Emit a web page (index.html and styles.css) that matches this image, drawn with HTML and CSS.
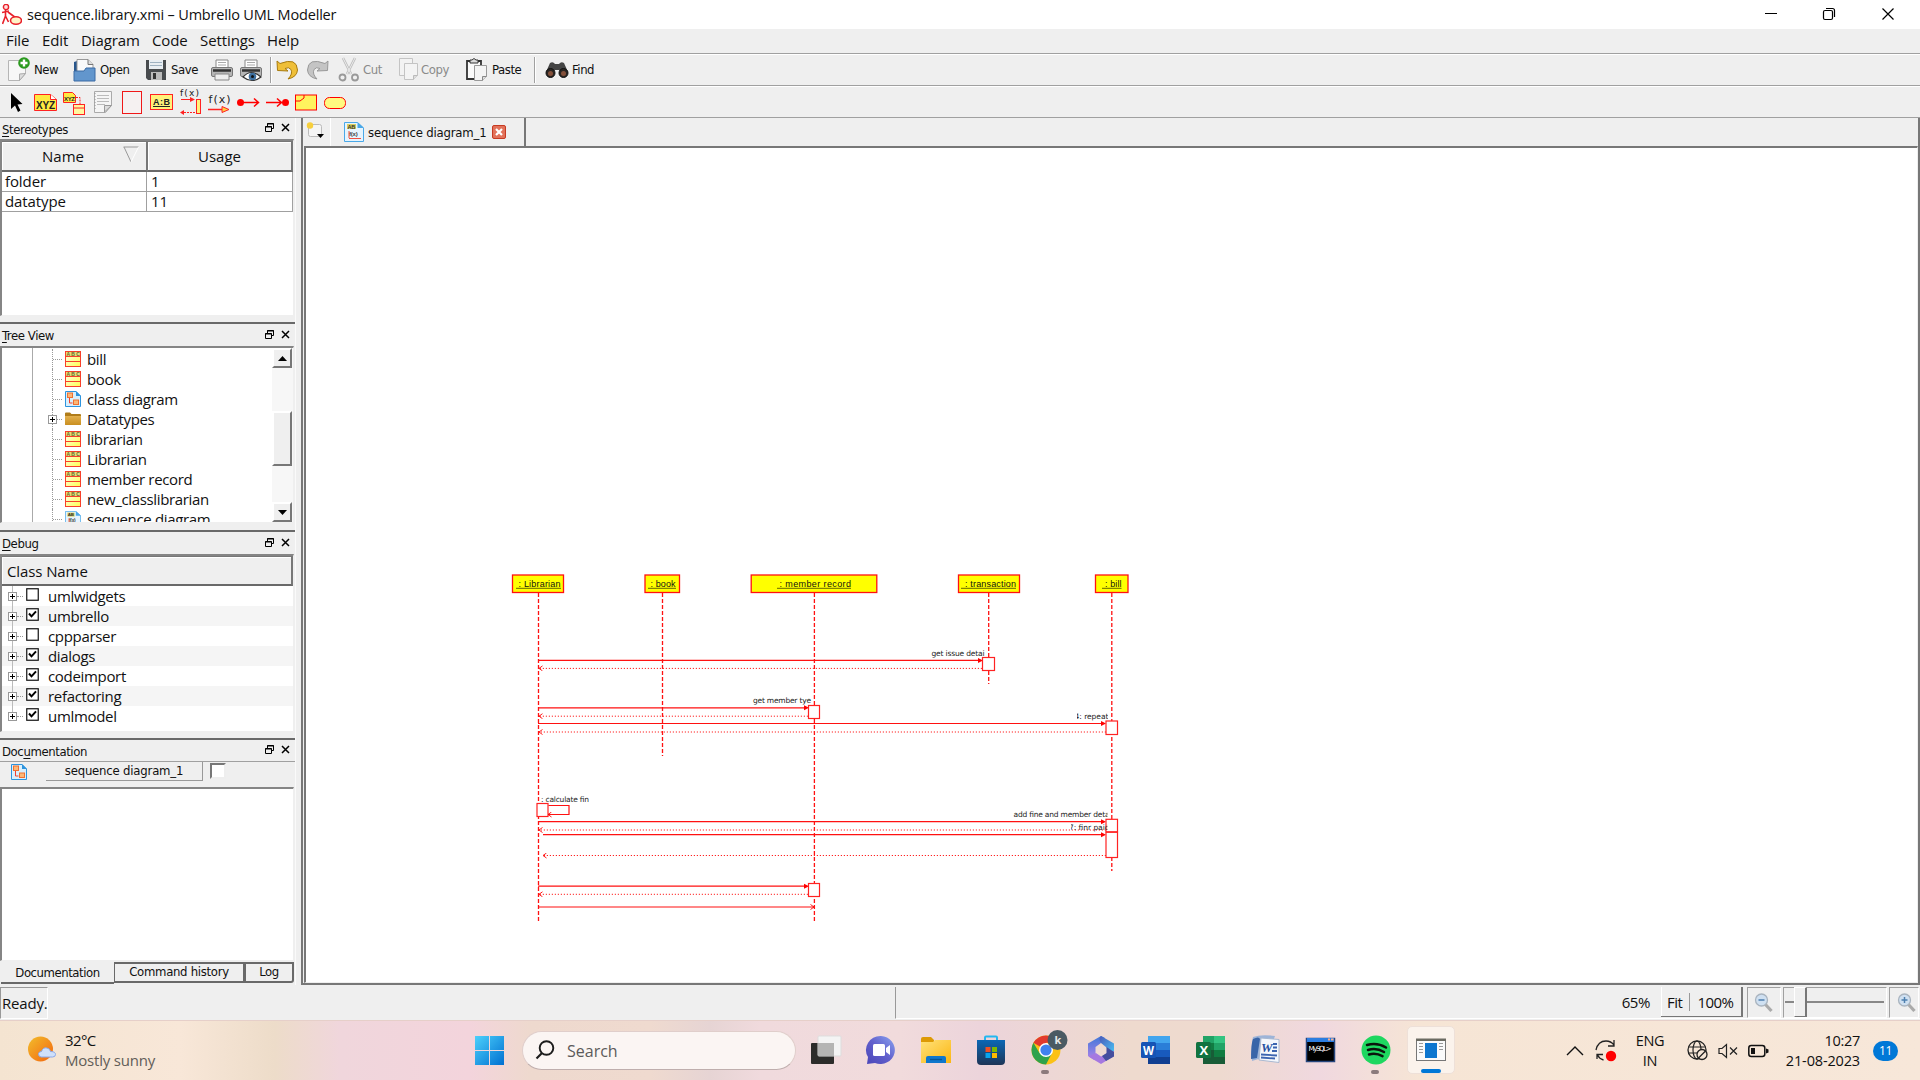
FILE: index.html
```html
<!DOCTYPE html>
<html lang="en">
<head>
<meta charset="utf-8">
<title>sequence.library.xmi – Umbrello UML Modeller</title>
<link rel="stylesheet" href="styles.css">
</head>
<body>
<svg class="defs" width="0" height="0">
  <defs>
    <linearGradient id="gy" x1="0" y1="0" x2="1" y2="1"><stop offset="0" stop-color="#fffef0"/><stop offset="1" stop-color="#ffff50"/></linearGradient>
    <linearGradient id="gf" x1="0" y1="0" x2="0" y2="1"><stop offset="0" stop-color="#e3b04e"/><stop offset="1" stop-color="#c98f20"/></linearGradient>
    <linearGradient id="gw" x1="0" y1="0" x2="1" y2="1"><stop offset="0" stop-color="#4cd0fb"/><stop offset="1" stop-color="#0070d1"/></linearGradient>
    <symbol id="i-class" viewBox="0 0 16 16"><rect x=".5" y=".5" width="15" height="15" fill="url(#gy)" stroke="#f7402a"/><path d="M1 1h14v4H1z" fill="#e6de78"/><path d="M0 5.5h16M0 10.5h16" stroke="#f7402a"/><text x="1.500" y="4.800" font-size="5" font-weight="bold" font-family="Liberation Sans, sans-serif" fill="#6b672c" textLength="13">ABC</text></symbol>
    <symbol id="i-cdiag" viewBox="0 0 16 16"><path d="M.5.5h10.500l4.500 4.500v10.500H.5z" fill="#d9effc" stroke="#2d94de"/><path d="M11 0v5h5z" fill="#2d94de"/><rect x="2.500" y="2" width="5" height="4.500" fill="#fbb878" stroke="#f07030"/><rect x="8.500" y="9" width="5" height="4.500" fill="#fbb878" stroke="#f07030"/><path d="M4.500 7v5h3" fill="none" stroke="#f04030"/></symbol>
    <symbol id="i-sdiag" viewBox="0 0 20 20"><path d="M.5.5h13l6 5.500v13.500H.5z" fill="#e6f4fd" stroke="#4aa8e8"/><path d="M13.500 0v6H20z" fill="#4aa8e8"/><rect x="3" y="2" width="9" height="5" fill="#d9d060"/><text x="3.500" y="6.800" font-size="5.500" font-weight="bold" font-family="Liberation Sans, sans-serif" fill="#333">AB</text><text x="5" y="14" font-size="6" font-weight="bold" font-family="Liberation Sans, sans-serif" fill="#444">f(x)</text><path d="M5 16.500h12M5 9v7" stroke="#f05040" fill="none"/></symbol>
    <symbol id="i-folder" viewBox="0 0 16 16"><path d="M0 2.500q0-1 1-1h4l1.500 1.500H15q1 0 1 1V13q0 1-1 1H1q-1 0-1-1z" fill="#b07c1a"/><path d="M0 5h16v8q0 1-1 1H1q-1 0-1-1z" fill="url(#gf)"/></symbol>
    <symbol id="i-float" viewBox="0 0 9 9"><path d="M2.500 3V.5h6v5H6.500M2 1h7" fill="none" stroke="#000"/><path d="M.5 3.500h6v5h-6zM0 4h7" fill="none" stroke="#000"/></symbol>
    <symbol id="i-x" viewBox="0 0 9 9"><path d="M1 1l7 7M8 1L1 8" stroke="#000" stroke-width="1.500"/></symbol>
    <symbol id="i-plus" viewBox="0 0 9 9"><rect x=".5" y=".5" width="8" height="8" fill="#fff" stroke="#999"/><path d="M2 4.500h5M4.500 2v5" stroke="#000"/></symbol>
    <symbol id="i-off" viewBox="0 0 13 13"><rect x=".75" y=".75" width="11.500" height="11.500" fill="#fff" stroke="#111" stroke-width="1.200"/></symbol>
    <symbol id="i-on" viewBox="0 0 13 13"><rect x=".75" y=".75" width="11.500" height="11.500" fill="#fff" stroke="#111" stroke-width="1.200"/><path d="M3 5.500l2.500 2.800 4.500-5" fill="none" stroke="#000" stroke-width="2"/></symbol>
    <symbol id="i-mag" viewBox="0 0 20 20"><path d="M11 11l6.500 7" stroke="#aaa" stroke-width="3.200"/><circle cx="7.500" cy="7" r="6" fill="#cfe0f1" stroke="#a9b4bf" stroke-width="1.300"/></symbol>
  </defs>
</svg>

<header class="titlebar">
  <svg class="app-icon" width="20" height="22" viewBox="0 0 20 22"><path d="M3.500 6v6M0 8.500l7-1.500M3.500 12L.5 20M3.500 12l3 6M6 8l8 6" stroke="#e8202a" stroke-width="1.600" fill="none"/><circle cx="4" cy="3" r="2.600" fill="#fdd" stroke="#e8202a" stroke-width="1.400"/><ellipse cx="14" cy="16.500" rx="5.500" ry="3.800" fill="#fff3c8" stroke="#e8202a" stroke-width="1.600"/></svg>
  <span class="title">sequence.library.xmi – Umbrello UML Modeller</span>
  <div class="win-buttons">
    <svg width="58" height="29"><path d="M23 13.500h12" stroke="#000"/></svg>
    <svg width="58" height="29"><rect x="23.500" y="10.500" width="9" height="9" rx="1.500" fill="none" stroke="#000" stroke-width="1.200"/><path d="M26 8.500h6.500q2 0 2 2V17" fill="none" stroke="#000" stroke-width="1.200"/></svg>
    <svg width="58" height="29"><path d="M24.500 8.500l11 11M35.500 8.500l-11 11" stroke="#000" stroke-width="1.200"/></svg>
  </div>
</header>

<nav class="menubar"><span class="m1">File</span><span class="m2">Edit</span><span class="m3">Diagram</span><span class="m4">Code</span><span class="m5">Settings</span><span>Help</span></nav>

<div class="toolbar main-tools">
  <div class="tool w-new"><svg width="24" height="26" viewBox="0 0 24 26"><path d="M1.500 3.500h17v13l-6 7h-11z" fill="#f7f7f7" stroke="#b5b5b5"/><path d="M12.500 23.500v-6.500l6-.5z" fill="#ddd" stroke="#aaa"/><circle cx="17" cy="6" r="5.800" fill="#2b9a1e"/><path d="M17 2.500v7M13.500 6h7" stroke="#fff" stroke-width="2.400"/></svg><span>New</span></div>
  <div class="tool w-open"><svg width="24" height="26" viewBox="0 0 24 26"><path d="M1 5l3-1v18H1z" fill="#28568c"/><path d="M4 2.500h11l5 5V16H4z" fill="#fafafa" stroke="#999"/><path d="M15 2.500v5h5" fill="#ddd" stroke="#777"/><path d="M1 14h10l2-3h9v13H1z" fill="#6296cd" stroke="#3a6ba4"/></svg><span>Open</span></div>
  <div class="tool w-save"><svg width="24" height="26" viewBox="0 0 24 26"><path d="M2 3h20v20H4l-2-2z" fill="#484b4e"/><rect x="5" y="3" width="14" height="9" fill="#e8eef3"/><path d="M6 5.500h12M6 8.500h12" stroke="#9eb2c2"/><rect x="7" y="15" width="11" height="8" fill="#bbb"/><rect x="9" y="16" width="3" height="6" fill="#333"/></svg><span>Save</span></div>
  <div class="tool w-print"><svg width="24" height="26" viewBox="0 0 24 26"><path d="M6 3h12v8H6z" fill="#fff" stroke="#888"/><path d="M8 5.500h8M8 8h8" stroke="#aaa"/><rect x="1.500" y="10.500" width="21" height="9" rx="1.500" fill="#b5b5b5" stroke="#777"/><path d="M3 13.500h18" stroke="#333" stroke-width="2.500"/><path d="M5 17h14v6H5z" fill="#eee" stroke="#888"/></svg></div>
  <div class="tool w-preview"><svg width="24" height="26" viewBox="0 0 24 26"><path d="M6 3h12v8H6z" fill="#fff" stroke="#888"/><path d="M8 5.500h8M8 8h8" stroke="#aaa"/><rect x="1.500" y="10.500" width="21" height="9" rx="1.500" fill="#b5b5b5" stroke="#777"/><path d="M3 13.500h18" stroke="#333" stroke-width="2.500"/><path d="M4 20q8-9 18 0-9 7-18 0z" fill="#fff" stroke="#333" stroke-width="1.200"/><circle cx="13.500" cy="19.500" r="3.800" fill="#3d6f9f"/><circle cx="13.500" cy="19.500" r="1.500" fill="#111"/></svg></div>
  <i class="sep"></i>
  <div class="tool w-undo"><svg width="24" height="24" viewBox="0 0 24 24"><path d="M1 3l3 2.500Q21-1 21.500 12 21 19 12 21q5-5 3-9.500-2-3-6-1L12 13 1.500 12.500z" fill="#efbf38" stroke="#a87b10"/></svg></div>
  <div class="tool w-redo"><svg width="24" height="24" viewBox="0 0 24 24"><path d="M23 3l-3 2.500Q3-1 2.500 12 3 19 12 21q-5-5-3-9.500 2-3 6-1L12 13l10.500-.5z" fill="#c4c4c4" stroke="#999"/></svg></div>
  <div class="tool off w-cut"><svg width="22" height="26" viewBox="0 0 22 26"><path d="M5 1l8 16M17 1L9 17" stroke="#bbb" stroke-width="2.600"/><path d="M5 1l8 16M17 1L9 17" stroke="#eee" stroke-width="1"/><circle cx="4.500" cy="20.500" r="3" fill="none" stroke="#999" stroke-width="1.800"/><circle cx="17" cy="20.500" r="3" fill="none" stroke="#999" stroke-width="1.800"/></svg><span>Cut</span></div>
  <div class="tool off w-copy"><svg width="22" height="26" viewBox="0 0 22 26"><path d="M1.500 1.500h13v17h-13z" fill="#f3f3f3" stroke="#c4c4c4"/><path d="M6.500 6.500h13v12l-4 4h-9z" fill="#f4f4f4" stroke="#c4c4c4"/><path d="M15.500 22.500v-4h4" fill="#ddd" stroke="#bbb"/></svg><span>Copy</span></div>
  <div class="tool w-paste"><svg width="24" height="26" viewBox="0 0 24 26"><path d="M2 4h14v18H2z" fill="#fafafa" stroke="#333" stroke-width="1.800"/><path d="M5 6V3h2q2-3 4 0h2v3z" fill="#ddd" stroke="#333"/><path d="M9.500 8.500h12v11l-4 4h-8z" fill="#f4f4f4" stroke="#999"/><path d="M17.500 23.500v-4h4" fill="#ddd" stroke="#888"/></svg><span>Paste</span></div>
  <i class="sep"></i>
  <div class="tool w-find"><svg width="24" height="20" viewBox="0 0 24 20"><path d="M5 3q3-2 5 1h4q2-3 5-1l4 9-5 2-4-4h-4l-4 4-5-2z" fill="#444"/><circle cx="5.500" cy="13" r="4.500" fill="#2a2522" stroke="#111"/><circle cx="18.500" cy="13" r="4.500" fill="#2a2522" stroke="#111"/><circle cx="5.500" cy="13.500" r="2.500" fill="#84503a"/><circle cx="18.500" cy="13.500" r="2.500" fill="#84503a"/></svg><span>Find</span></div>
</div>

<div class="toolbar uml-tools">
  <svg width="29" height="26" viewBox="0 0 29 26"><path d="M9 4l11.500 11-5 .5 3 6-2.500 1.500-3-6.500L9 20z" fill="#000"/></svg>
  <svg width="29" height="26" viewBox="0 0 29 26"><path d="M3.500 5.500h16l6 5v11h-22z" fill="#ffe940" stroke="#f22"/><path d="M19.500 5.500v5h6" fill="#fff" stroke="#f22"/><text x="5" y="20" class="svg-b" font-size="10" textLength="19">XYZ</text></svg>
  <svg width="29" height="26" viewBox="0 0 29 26"><path d="M3.500 3.500h9l3 3v7h-12z" fill="#ffe940" stroke="#f22"/><text x="4" y="12" class="svg-b" font-size="6" textLength="11">XYZ</text><path d="M16 8.500h4V15" stroke="#f22" fill="none" stroke-dasharray="2 1"/><rect x="13.500" y="15.500" width="11" height="10" fill="#fff7a0" stroke="#f22"/><path d="M13 19h12" stroke="#f22"/></svg>
  <svg width="29" height="26" viewBox="0 0 29 26"><path d="M5.500 2.500h17v14l-6 7h-11z" fill="#f5f5f5" stroke="#aaa"/><path d="M8 6.500h12M8 9.500h12M8 12.500h12M8 15.500h8" stroke="#bbb"/><path d="M6 4v18" stroke="#999" stroke-dasharray="1 2"/><path d="M15.500 23v-6.500h7z" fill="#ddd" stroke="#999"/></svg>
  <svg width="29" height="26" viewBox="0 0 29 26"><rect x="4.500" y="2.500" width="19" height="22" fill="#f5f1f1" stroke="#f01818"/></svg>
  <svg width="29" height="26" viewBox="0 0 29 26"><rect x="3.500" y="5.500" width="22" height="15" fill="#fff27a" stroke="#f22"/><text x="6" y="15.500" class="svg-b" font-size="9" textLength="17">A:B</text><path d="M6 17.500h17" stroke="#222"/></svg>
  <svg width="29" height="26" viewBox="0 0 29 26"><text x="4" y="7" class="svg-f" font-size="9" textLength="19">f(x)</text><path d="M5 10.500h12" stroke="#f22"/><path d="M8 23.500h12" stroke="#f22" stroke-dasharray="2 1"/><path d="M14 8v5l5-2.500zM8 21v5l-4-2.500z" fill="#f22"/><rect x="20.500" y="10.500" width="4" height="14" fill="#fff27a" stroke="#f22"/></svg>
  <svg width="29" height="26" viewBox="0 0 29 26"><text x="3.500" y="14" class="svg-f" font-size="11" textLength="22">f(x)</text><path d="M3 20.500h15" stroke="#f22" stroke-width="1.500"/><path d="M17 17.500v6l7-3z" fill="#ffd040" stroke="#f22"/></svg>
  <svg width="29" height="26" viewBox="0 0 29 26"><circle cx="6.500" cy="13.500" r="3.500" fill="#f00"/><path d="M7 13.500h17M20 9.500l4.500 4-4.500 4" stroke="#f00" stroke-width="1.500" fill="none"/></svg>
  <svg width="29" height="26" viewBox="0 0 29 26"><circle cx="22.500" cy="13.500" r="3.500" fill="#f00"/><path d="M3 13.500h16M14 9.500l4.500 4-4.500 4" stroke="#f00" stroke-width="1.500" fill="none"/></svg>
  <svg width="29" height="26" viewBox="0 0 29 26"><rect x="3.500" y="6" width="21" height="15" fill="#fff35e" stroke="#f00"/><path d="M4 12h4l4-3V6" fill="none" stroke="#f00"/></svg>
  <svg width="29" height="26" viewBox="0 0 29 26"><rect x="3.500" y="8.500" width="21" height="11" rx="5" fill="#fffa80" stroke="#f00"/></svg>
</div>

<main class="workspace">
  <aside class="docks">
    <section class="dock d-stereo">
      <h2><span><u>S</u>tereotypes</span><svg width="9" height="9"><use href="#i-float"/></svg><svg width="9" height="9"><use href="#i-x"/></svg></h2>
      <div class="pane">
        <div class="grid-head"><div class="c1"><span>Name</span><svg width="17" height="17"><path d="M.5 1h15M1 1l7 15" stroke="#999" fill="none"/><path d="M15.500 1L8 16" stroke="#fff"/></svg></div><div class="c2">Usage</div></div>
        <div class="grid-row"><span>folder</span><span>1</span></div>
        <div class="grid-row"><span>datatype</span><span>11</span></div>
      </div>
    </section>
    <section class="dock d-tree">
      <h2><span><u>T</u>ree View</span><svg width="9" height="9"><use href="#i-float"/></svg><svg width="9" height="9"><use href="#i-x"/></svg></h2>
      <div class="pane tree">
        <ul>
          <li><i></i><svg width="16" height="16"><use href="#i-class"/></svg>bill</li>
          <li><i></i><svg width="16" height="16"><use href="#i-class"/></svg>book</li>
          <li><i></i><svg width="16" height="16"><use href="#i-cdiag"/></svg>class diagram</li>
          <li><svg class="exp" width="9" height="9"><use href="#i-plus"/></svg><i></i><svg width="16" height="16"><use href="#i-folder"/></svg>Datatypes</li>
          <li><i></i><svg width="16" height="16"><use href="#i-class"/></svg>librarian</li>
          <li><i></i><svg width="16" height="16"><use href="#i-class"/></svg>Librarian</li>
          <li><i></i><svg width="16" height="16"><use href="#i-class"/></svg>member record</li>
          <li><i></i><svg width="16" height="16"><use href="#i-class"/></svg>new_classlibrarian</li>
          <li><i></i><svg width="16" height="16"><use href="#i-sdiag"/></svg>sequence diagram</li>
        </ul>
        <div class="scroll"><b><svg width="9" height="5"><path d="M0 5l4.500-5L9 5z"/></svg></b><div class="up"></div><div class="thumb"></div><div class="down"></div><b><svg width="9" height="5"><path d="M0 0l4.500 5L9 0z"/></svg></b></div>
      </div>
    </section>
    <section class="dock d-debug">
      <h2><span><u>D</u>ebug</span><svg width="9" height="9"><use href="#i-float"/></svg><svg width="9" height="9"><use href="#i-x"/></svg></h2>
      <div class="pane">
        <div class="class-head">Class Name</div>
        <ul class="checks">
          <li><svg class="exp" width="9" height="9"><use href="#i-plus"/></svg><i></i><svg width="13" height="13"><use href="#i-off"/></svg>umlwidgets</li>
          <li><svg class="exp" width="9" height="9"><use href="#i-plus"/></svg><i></i><svg width="13" height="13"><use href="#i-on"/></svg>umbrello</li>
          <li><svg class="exp" width="9" height="9"><use href="#i-plus"/></svg><i></i><svg width="13" height="13"><use href="#i-off"/></svg>cppparser</li>
          <li><svg class="exp" width="9" height="9"><use href="#i-plus"/></svg><i></i><svg width="13" height="13"><use href="#i-on"/></svg>dialogs</li>
          <li><svg class="exp" width="9" height="9"><use href="#i-plus"/></svg><i></i><svg width="13" height="13"><use href="#i-on"/></svg>codeimport</li>
          <li><svg class="exp" width="9" height="9"><use href="#i-plus"/></svg><i></i><svg width="13" height="13"><use href="#i-on"/></svg>refactoring</li>
          <li><svg class="exp" width="9" height="9"><use href="#i-plus"/></svg><i></i><svg width="13" height="13"><use href="#i-on"/></svg>umlmodel</li>
        </ul>
      </div>
    </section>
    <section class="dock d-doc">
      <h2><span>Doc<u>u</u>mentation</span><svg width="9" height="9"><use href="#i-float"/></svg><svg width="9" height="9"><use href="#i-x"/></svg></h2>
      <div class="doc-bar"><svg width="16" height="16"><use href="#i-cdiag"/></svg><span class="doc-name">sequence diagram_1</span><i class="box"></i></div>
      <div class="pane"></div>
    </section>
    <div class="dock-tabs"><span class="on">Documentation</span><span class="t2">Command history</span><span class="t3">Log</span></div>
  </aside>

  <section class="editor">
    <div class="tabs">
      <div class="new-tab"><svg width="20" height="18" viewBox="0 0 20 18"><rect x="2.500" y="2.500" width="13" height="12" rx="2" fill="#f5f5f5" stroke="#bbb"/><circle cx="4" cy="3.500" r="3.200" fill="#f7cf3c"/><path d="M11 12h7l-3.500 4z" fill="#000"/></svg></div>
      <div class="tab"><svg width="20" height="20"><use href="#i-sdiag"/></svg><span>sequence diagram_1</span><svg width="14" height="14" viewBox="0 0 14 14"><rect x=".5" y=".5" width="13" height="13" rx="1.500" fill="#e2725a" stroke="#c63a22"/><path d="M4 4l6 6M10 4l-6 6" stroke="#fff" stroke-width="2.200"/></svg></div>
    </div>
    <div class="canvas">
      <svg width="1611" height="834" viewBox="306 148 1611 834">
        <defs>
          <clipPath id="c4"><rect x="1077" y="700" width="31" height="22"/></clipPath>
          <clipPath id="c7"><rect x="1071" y="815" width="36.500" height="22"/></clipPath>
          <clipPath id="c6"><rect x="1012" y="805" width="95.500" height="14"/></clipPath>
          <marker id="solid" viewBox="0 0 5 6" refX="2" refY="3" markerWidth="5" markerHeight="6" markerUnits="userSpaceOnUse"><path d="M0 .5L5 3 0 5.500z" fill="#f00"/></marker>
          <marker id="open" viewBox="0 0 5 6" refX="4" refY="3" markerWidth="5" markerHeight="6" markerUnits="userSpaceOnUse" orient="auto"><path d="M.5.5L4 3 .5 5.500" fill="none" stroke="#f00" stroke-width=".9"/></marker>
        </defs>
        <g class="life"><path d="M538.500 593v330"/><path d="M662.500 593v163"/><path d="M814.400 593v330"/><path d="M988.700 593v91"/><path d="M1111.800 593v278"/></g>
        <g class="msg">
          <path d="M538 660.400h442"/><path d="M538 707.800h268"/><path d="M538 723.500h565"/><path d="M538 821.700h565"/><path d="M543 834.700h560"/><path d="M538 886.200h268"/>
        </g>
        <path class="line" d="M538 907h276" marker-end="url(#open)"/>
        <g class="ret">
          <path d="M982 668.400H539"/><path d="M808 716.200H539"/><path d="M1106 732H539"/><path d="M1106 830H539"/><path d="M1106 855.500H543"/><path d="M808 894.300H539"/>
        </g>
        <g class="act">
          <rect x="982.500" y="657.500" width="12" height="13"/><rect x="808.500" y="705.500" width="11" height="13"/><rect x="1106" y="721" width="11.500" height="13.500"/><rect x="537" y="803.500" width="11" height="13"/><rect x="1106" y="819.300" width="11.500" height="12.500"/><rect x="1106" y="832.300" width="11.500" height="25.200"/><rect x="808.500" y="883.500" width="11" height="13"/>
        </g>
        <path class="line" d="M548.500 805.500H569v9h-21" marker-end="url(#open)"/>
        <g class="obj"><rect x="512.500" y="575" width="51" height="17.500"/><rect x="645" y="575" width="34.500" height="17.500"/><rect x="751.200" y="575" width="125.600" height="17.500"/><rect x="958.500" y="575" width="61" height="17.500"/><rect x="1095.500" y="575" width="32.500" height="17.500"/></g>
        <g class="objt">
          <path d="M516 588.300h45M648 588.300h28M777 588.300h74M961 588.300h55M1102 588.300h19.500"/>
          <text x="518.500" y="587" textLength="42">: Librarian</text><text x="650.500" y="587" textLength="25">: book</text><text x="779.500" y="587" textLength="71.500">: member record</text><text x="965" y="587" textLength="51">: transaction</text><text x="1105" y="587" textLength="16.500">: bill</text>
        </g>
        <g class="lab">
          <text x="931.500" y="656" textLength="53">get issue detai</text><text x="753" y="703" textLength="58">get member tye</text><text x="541" y="802" textLength="48">: calculate fin</text>
          <g clip-path="url(#c4)"><text x="1074.500" y="719" textLength="34">4: repeat</text></g>
          <g clip-path="url(#c6)"><text x="1013.500" y="817" textLength="96">add fine and member deta</text></g>
          <g clip-path="url(#c7)"><text x="1069" y="830" textLength="40.500">7: finr paid</text></g>
        </g>
      </svg>
    </div>
  </section>
</main>

<footer class="status">
  <span class="ready">Ready.</span>
  <div class="zoombox">
    <span class="pct">65%</span>
    <div class="zbtn"><span>Fit</span><i></i><span>100%</span></div>
    <div class="zcell z1"><svg width="20" height="20"><use href="#i-mag"/><path d="M4.500 7h6" stroke="#4e7fae" stroke-width="1.500"/></svg></div>
    <div class="zcell z2"><div class="track t-left"></div><div class="knob"></div><div class="track"></div></div>
    <div class="zcell z3"><svg width="20" height="20"><use href="#i-mag"/><path d="M4.500 7h6M7.500 4v6" stroke="#4e7fae" stroke-width="1.500"/></svg></div>
  </div>
</footer>

<footer class="taskbar">
  <div class="weather">
    <svg width="28" height="28" viewBox="0 0 28 28"><defs><linearGradient id="sun" x1="0" y1="0" x2="1" y2="1"><stop offset="0" stop-color="#f2bd2c"/><stop offset="1" stop-color="#f3650f"/></linearGradient></defs><circle cx="12.500" cy="13" r="12.500" fill="url(#sun)"/><path d="M13 21q-3-1-2.500-3.500.5-2 3-2 1.500-4.500 5.500-3.500 3 .5 3.500 3.500 5 0 5 3 0 2.500-3 2.500z" fill="#cfe0fb" stroke="#8ba8e8"/></svg>
    <div><p>32°C</p><p class="dim">Mostly sunny</p></div>
  </div>
  <svg class="start" width="29" height="29"><path d="M0 0h14v14H0zM15 0h14v14H15zM0 15h14v14H0zM15 15h14v14H15z" fill="url(#gw)"/></svg>
  <div class="search"><svg width="20" height="20" viewBox="0 0 20 20"><circle cx="11.500" cy="8" r="6.800" fill="none" stroke="#1c1c1c" stroke-width="1.900"/><path d="M7 13l-5.500 5.500" stroke="#1c1c1c" stroke-width="2.200"/></svg><span>Search</span></div>
  <div class="apps">
    <div class="app"><svg width="32" height="32" viewBox="0 0 32 32"><rect x="1" y="9" width="23" height="21" rx="1" fill="#2c2c2a"/><rect x="8" y="2" width="23" height="20" rx="1" fill="#f4f4f4" stroke="#ddd"/><path d="M8 9h16v13H8z" fill="#b5b5b4"/></svg></div>
    <div class="app"><svg width="32" height="32" viewBox="0 0 32 32"><defs><linearGradient id="ch" x1="0" y1="1" x2="1" y2="0"><stop offset="0" stop-color="#4a46b8"/><stop offset=".5" stop-color="#6260cc"/><stop offset="1" stop-color="#8aa6f2"/></linearGradient></defs><path d="M16 2a14.500 14 0 1 1-6 27L2 30l1-7A14.500 14 0 0 1 16 2z" fill="url(#ch)"/><rect x="8" y="10" width="12" height="12" rx="1.500" fill="#fff"/><path d="M21 14l4-3v10l-4-3z" fill="#fff"/></svg></div>
    <div class="app"><svg width="32" height="32" viewBox="0 0 32 32"><path d="M1 5q0-2 2-2h8l3 3v3H1z" fill="#dd9a05"/><defs><linearGradient id="fo" x1="0" y1="0" x2="1" y2="1"><stop offset="0" stop-color="#ffe27a"/><stop offset="1" stop-color="#fbb612"/></linearGradient></defs><path d="M1 8h12l2-2h16v23H1z" fill="url(#fo)"/><path d="M6 29v-5q0-2 2-2h16q2 0 2 2v5z" fill="#0f77cc"/><path d="M10 25.500h12" stroke="#075596" stroke-width="1.300"/></svg></div>
    <div class="app"><svg width="32" height="32" viewBox="0 0 32 32"><defs><linearGradient id="st" x1="0" y1="0" x2="0" y2="1"><stop offset="0" stop-color="#0b67b5"/><stop offset="1" stop-color="#1e3557"/></linearGradient></defs><path d="M10 7V3.500q0-1 1-1h10q1 0 1 1V7" fill="none" stroke="#24b7f0" stroke-width="2"/><path d="M2 6h28v21q0 4-4 4H6q-4 0-4-4z" fill="url(#st)"/><path d="M10.500 13h5v5h-5z" fill="#f04f23"/><path d="M17 13h5v5h-5z" fill="#7fb900"/><path d="M10.500 19h5v5h-5z" fill="#08a4ee"/><path d="M17 19h5v5h-5z" fill="#ffb900"/></svg></div>
    <div class="app run"><svg width="38" height="38" viewBox="0 0 38 38"><circle cx="16" cy="22" r="14.500" fill="#fbc116"/><path d="M16 22L3.400 14.800A14.500 14.500 0 0 1 28.500 14.800H16z" fill="#e23a2e"/><path d="M16 22l6 3-6 11.500A14.500 14.500 0 0 1 3.400 14.800L9.500 25z" fill="#2fa24c"/><circle cx="16" cy="22" r="7" fill="#fff"/><circle cx="16" cy="22" r="5.600" fill="#3f81ee"/><circle cx="27.500" cy="12" r="10" fill="#4a5a63"/><text x="24.500" y="16" font-size="11" font-weight="bold" font-family="Noto Sans, sans-serif" fill="#e8e8e8">k</text></svg></div>
    <div class="app"><svg width="32" height="32" viewBox="0 0 32 32"><defs><linearGradient id="m1" x1="0" y1="0" x2="0" y2="1"><stop offset="0" stop-color="#3f78d8"/><stop offset="1" stop-color="#b183ea"/></linearGradient><linearGradient id="m2" x1="0" y1="0" x2="1" y2="1"><stop offset="0" stop-color="#4a58b8"/><stop offset="1" stop-color="#48c8f8"/></linearGradient></defs><path d="M16 2L3 9.500V22l6 4 1.500-3V13l5.500-4 4-5z" fill="url(#m1)"/><path d="M16 2l13 7.500V21l-7.500-7.500L16 9q-3-4 0-7z" fill="url(#m2)"/><path d="M29 17v5L16 30 3.500 22.500 11 19l5 3.500z" fill="#a578e0"/><path d="M21.500 13l7.500 5v4.500L21 27l-4-5 4.500-3z" fill="#454e9e"/><path d="M16 11l5 2.500v5.500l-5 2.500-4.500-2.500v-5.500z" fill="#eedad3"/></svg></div>
    <div class="app"><svg width="32" height="32" viewBox="0 0 32 32"><path d="M8 2h22v7H8z" fill="#42a5ee"/><path d="M8 9h22v7H8z" fill="#2a7ed8"/><path d="M8 16h22v7H8z" fill="#185abd"/><path d="M8 23h22v7H8z" fill="#103f91"/><rect x="1" y="8" width="15" height="16" rx="1.500" fill="#1654b5"/><text x="3" y="20.500" class="tile" textLength="11" lengthAdjust="spacingAndGlyphs">W</text></svg></div>
    <div class="app"><svg width="32" height="32" viewBox="0 0 32 32"><path d="M8 2h11v7H8z" fill="#21a366"/><path d="M19 2h11v7H19z" fill="#33c481"/><path d="M8 9h11v7H8z" fill="#107c41"/><path d="M19 9h11v7H19z" fill="#21a366"/><path d="M8 16h11v7H8z" fill="#185c37"/><path d="M19 16h11v7H19z" fill="#107c41"/><path d="M8 23h22v7H8z" fill="#185c37"/><rect x="1" y="8" width="15" height="16" rx="1.500" fill="#117340"/><text x="4.500" y="20.500" class="tile">X</text></svg></div>
    <div class="app"><svg width="32" height="32" viewBox="0 0 32 32"><path d="M3 3q8-3 22-1l-3 8-4 12-16 5Q1 10 3 3z" fill="#9db4d8"/><path d="M3 5q6-3 7 0L7 24l-6 1Q1 10 3 5z" fill="#3965a8"/><path d="M11 4l18 1.500v23L9 26z" fill="#f4f7fc" stroke="#a9b8d0"/><text x="11" y="18" font-size="13" font-weight="bold" font-style="italic" font-family="Liberation Serif, serif" fill="#2450a0">W</text><path d="M23 10h4M23 13.500h4M22 17h5M11 20.500l16 1M11 23.500l14 1" stroke="#3b64b0" stroke-width="1.800"/></svg></div>
    <div class="app"><svg width="32" height="32" viewBox="0 0 32 32"><rect x="1.500" y="4.500" width="28" height="23" fill="#000" stroke="#26467e" stroke-width="1.500"/><path d="M2 4h27v4H2z" fill="#2b7de0"/><path d="M23 5.500h2M26 5.500h2.500" stroke="#f5b090" stroke-width="2"/><text x="3.500" y="16.500" font-size="7" font-family="DejaVu Sans, sans-serif" fill="#fff" textLength="23">MySQL&gt;</text></svg></div>
    <div class="app run"><svg width="32" height="32" viewBox="0 0 32 32"><circle cx="16" cy="16" r="14.500" fill="#1ed760"/><path d="M7 11q10-3 19 2.500M8 16q8.500-2.500 16 2M9 20.500q7-2 13.500 1.700" fill="none" stroke="#0a140d" stroke-width="2.500" stroke-linecap="round"/></svg></div>
    <div class="app active"><svg width="32" height="32" viewBox="0 0 32 32"><rect x="1.500" y="5.500" width="29" height="21" fill="#fafafa" stroke="#777"/><path d="M1 4.500h30v2.500H1z" fill="#6b6b62"/><rect x="10" y="9" width="12" height="15" fill="#0d76cf"/><path d="M4 9.500h4M4 12.500h4M4 15.500h4M4 18.500h4M24 9.500h4M24 12.500h4M24 15.500h4" stroke="#999"/></svg></div>
  </div>
  <div class="tray">
    <svg width="18" height="12"><path d="M1 10l8-8 8 8" fill="none" stroke="#111" stroke-width="1.400"/></svg>
    <svg class="sync" width="22" height="24" viewBox="0 0 22 24"><path d="M1 11Q3 2 11 2q5 0 8 4M19 1v6h-6M2 20v-4.500h6M2.500 16q2 4 6 5" fill="none" stroke="#222" stroke-width="1.300"/><circle cx="16" cy="17" r="5.200" fill="#f00"/></svg>
    <div class="lang"><p>ENG</p><p>IN</p></div>
    <svg class="net" width="22" height="22" viewBox="0 0 22 22"><circle cx="10" cy="10" r="9" fill="none" stroke="#222" stroke-width="1.300"/><ellipse cx="10" cy="10" rx="4" ry="9" fill="none" stroke="#222" stroke-width="1.200"/><path d="M1.500 7h17M1.500 13h10" stroke="#222" stroke-width="1.200"/><circle cx="15" cy="14.500" r="5" fill="#f6e6d7" stroke="#222" stroke-width="1.300"/><path d="M11.500 18l7-7" stroke="#222" stroke-width="1.300"/></svg>
    <svg class="vol" width="20" height="16" viewBox="0 0 20 16"><path d="M1 5.500h3L8.500 1.500v13L4 10.500H1z" fill="none" stroke="#222" stroke-width="1.200"/><path d="M12 4.500l7 7M19 4.500l-7 7" stroke="#222" stroke-width="1.200"/></svg>
    <svg class="bat" width="21" height="14" viewBox="0 0 21 14"><rect x=".8" y="1.500" width="16" height="11" rx="2.500" fill="none" stroke="#111" stroke-width="1.500"/><rect x="3" y="4" width="4" height="6" fill="#111"/><path d="M18 4.500l2.500 1v3l-2.500 1z" fill="#111"/></svg>
    <div class="clock"><p>10:27</p><p class="date">21-08-2023</p></div>
    <span class="badge">11</span>
  </div>
</footer>
</body>
</html>
```
FILE: styles.css
```css
* { box-sizing: border-box; }
body { margin: 0; width: 1920px; height: 1080px; overflow: hidden; display: flex; flex-direction: column; background: #efefef; color: #111; font: 15px/20px "Open Sans", "Noto Sans", sans-serif; }
p, h2, ul { margin: 0; padding: 0; list-style: none; }
svg { display: block; flex: none; }
.defs { position: absolute; }
span { white-space: nowrap; }

.titlebar { height: 29px; background: #fff; display: flex; align-items: center; padding-left: 2px; flex: none; }
.title { margin-left: 5px; letter-spacing: -0.18px; font-size: 14.5px; }
.win-buttons { display: flex; margin-left: auto; margin-right: 4px; }

.menubar { height: 26px; flex: none; display: flex; align-items: center; padding: 0 0 3px 6px; border-bottom: 1px solid #fff; box-shadow: inset 0 -1px #a0a0a0; letter-spacing: -0.1px; }
.menubar span { flex: none; }
.m1 { width: 36px; } .m2 { width: 39px; } .m3 { width: 71px; } .m4 { width: 48px; } .m5 { width: 67px; }

.toolbar { height: 32px; flex: none; display: flex; align-items: center; border-bottom: 1px solid #fff; box-shadow: inset 0 -1px #a0a0a0; }
.main-tools, .tab, .dock h2, .doc-name, .dock-tabs { font-family: "DejaVu Sans Condensed", "DejaVu Sans", sans-serif; font-size: 13px; letter-spacing: -0.45px; }
.main-tools { padding: 0 0 1px 7px; }
.tool { display: flex; align-items: center; gap: 3px; flex: none; }
.off { color: #8a8a8a; }
.w-new { width: 66px; } .w-open { width: 71px; } .w-save { width: 66px; } .w-print { width: 29px; } .w-preview { width: 31px; }
.sep { width: 2px; height: 26px; background: #a0a0a0; border-right: 1px solid #fff; }
.w-undo { width: 29px; margin-left: 4px; } .w-redo { width: 33px; } .w-cut { width: 60px; } .w-copy { width: 67px; gap: 1px; } .w-paste { width: 69px; } .w-find { margin-left: 9px; }
.uml-tools { padding: 0 0 2px 2px; border-bottom: 0; height: 31px; }
.svg-b { font-family: "Liberation Sans", sans-serif; font-weight: bold; fill: #222; }
.svg-f { font-family: "DejaVu Sans", sans-serif; fill: #222; }

.workspace { display: flex; flex: none; height: 867px; }
.docks { width: 296px; display: flex; flex-direction: column; border-right: 1px solid #fafafa; }
.dock { display: flex; flex-direction: column; flex: none; border-bottom: 2px solid #696969; }
.dock h2 { height: 22px; flex: none; display: flex; align-items: center; gap: 7px; padding: 2px 5px 0 2px; font-weight: normal; line-height: 18px; letter-spacing: -0.4px; }
.dock h2 span { flex: 1; }
.dock h2 svg { margin-top: -4px; }
.dock u { text-underline-offset: 2px; }
.pane { flex: 1; margin-right: 1px; background: #fff; border: 2px solid #696969; border-width: 2px 1px 1px 2px; border-color: #858585 #efefef #efefef #858585; min-height: 0; overflow: hidden; }
.d-stereo { height: 206px; } .d-stereo .pane, .d-debug .pane { margin-bottom: 6px; }
.d-tree { height: 208px; } .d-tree .pane { margin-bottom: 7px; }
.d-debug { height: 208px; }
.d-doc { height: 221px; border-bottom: 0; }
.dock.d-stereo h2 { height: 21px; }
.dock.d-doc h2 { height: 21px; }

.grid-head { display: flex; height: 31px; }
.grid-head > div, .class-head { background: #efefef; border-right: 2px solid #777; border-bottom: 2px solid #696969; border-top: 1px solid #777; box-shadow: inset 1px 1px #fff; display: flex; align-items: center; }
.c1 { width: 146px; padding-left: 40px; gap: 39px; }
.c1 svg { margin-top: -4px; }
.c2 { flex: 1; justify-content: center; }
.grid-row { height: 20px; display: flex; border-bottom: 1px solid #a0a0a0; border-right: 1px solid #a0a0a0; line-height: 18px; letter-spacing: -0.1px; }
.grid-row span { padding-left: 3px; width: 146px; border-right: 1px solid #a0a0a0; }
.grid-row span + span { border: 0; padding-left: 4px; }

.tree { display: flex; }
.tree ul { flex: 1; padding: 1px 0 0 50px; background: linear-gradient(#aaa, #aaa) 30px 0 / 1px 100% no-repeat; overflow: hidden; }
.tree li { height: 20px; display: flex; align-items: center; border-left: 1px dotted #999; white-space: nowrap; line-height: 20px; letter-spacing: -0.35px; }
.tree li i { width: 9px; margin-right: 3px; border-top: 1px dotted #999; flex: none; }
.tree li svg { margin-right: 6px; }
.tree li .exp { margin: 0 0 0 -5px; }
.tree li .exp + i { width: 5px; }
.scroll { width: 21px; padding-right: 1px; display: flex; flex-direction: column; background: #f7f7f7; }
.scroll b, .thumb { height: 20px; background: #efefef; border: 2px solid #777; border-color: #fff #777 #777 #fff; display: flex; align-items: center; justify-content: center; flex: none; }
.up { height: 43px; } .thumb { height: 55px; } .down { flex: 1; }

.class-head { height: 30px; padding-left: 5px; letter-spacing: -0.1px; }
.checks { background: linear-gradient(#bbb, #bbb) 10px 0 / 1px 132px no-repeat; letter-spacing: -0.32px; }
.checks li { height: 20px; display: flex; align-items: center; line-height: 20px; padding-left: 6px; }
.checks li:nth-child(even) { background: linear-gradient(#bbb, #bbb) 10px 0 / 1px 100% no-repeat #f5f5f5; }
.checks i { width: 6px; border-top: 1px dotted #999; margin-right: 3px; }
.checks i + svg { margin: -3px 9px 0 0; }

.doc-bar { height: 26px; border-top: 1px solid #a0a0a0; display: flex; padding-left: 11px; align-items: flex-start; }
.doc-bar svg { margin-top: 2px; }
.doc-bar .doc-name { margin-left: 19px; width: 157px; height: 19px; text-align: center; line-height: 18px; border: 1px solid #999; border-width: 0 1px 1px 0; letter-spacing: -0.2px; }
.box { margin: 1px 0 0 7px; width: 16px; height: 16px; background: #fff; border: 2px solid #777; border-color: #777 #eee #eee #777; }
.dock-tabs { display: flex; height: 24px; line-height: 22px; border-top: 1px solid #efefef; }
.dock-tabs span { text-align: center; border: 1px solid #696969; border-width: 2px 2px 2px 1px; height: 21px; line-height: 16px; }
.dock-tabs .on { width: 113px; height: 22px; line-height: 22px; border-width: 0 0 2px; margin-left: 1px; }
.dock-tabs .t2 { width: 131px; letter-spacing: -0.3px; } .t3 { width: 49px; border-radius: 0 0 3px 0; }

.editor { flex: 1; margin-left: 5px; border: 2px solid #777; border-width: 0 2px 2px 2px; display: flex; flex-direction: column; padding-left: 1px; }
.tabs { height: 28px; display: flex; }
.new-tab { width: 26px; padding: 4px 0 0 2px; }
.tab { width: 196px; border-right: 2px solid #777; border-left: 1px solid #fff; display: flex; align-items: center; padding-left: 13px; letter-spacing: -0.2px; }
.tab span { margin: 1px 6px 0 4px; }
.tab svg { margin-top: 0; }
.canvas { height: 837px; background: #fff; border: 2px solid #777; border-color: #777 #efefef #efefef #777; border-width: 2px 1px 1px 2px; overflow: hidden; }
.life { stroke: #f11; stroke-width: 1.300; stroke-dasharray: 4 2; }
.msg, .line { stroke: #f11; stroke-width: 1.200; fill: none; }
.msg path { marker-end: url(#solid); }
.ret { stroke: #f22; stroke-width: 1; stroke-dasharray: 1.200 1.800; }
.ret path { marker-end: url(#open); }
.act rect { fill: #fff; stroke: #f22; stroke-width: 1.200; }
.obj rect { fill: #ff0; stroke: #f11; stroke-width: 1.300; }
.objt { font: 9px "Liberation Sans", sans-serif; fill: #111; stroke: #555500; stroke-width: .9; }
.objt text { stroke: none; }
.lab { font: 7.500px "DejaVu Sans", sans-serif; fill: #222; }

.status { height: 35px; flex: none; display: flex; justify-content: space-between; padding-top: 2px; padding-bottom: 1px; letter-spacing: -0.2px; background: #efefef; }
.ready { width: 48px; padding-left: 1px; line-height: 31px; border: 1px solid #999; border-color: #999 #fff #fff #999; }
.zoombox { width: 1025px; border-left: 1px solid #999; border-bottom: 1px solid #fff; display: flex; justify-content: flex-end; align-items: stretch; padding-right: 1px; }
.pct { line-height: 31px; margin-right: 11px; letter-spacing: -0.4px; }
.zbtn { width: 82px; margin-bottom: 1px; border: 1px solid #777; border-width: 0 2px 1px 0; display: flex; align-items: center; padding-left: 6px; gap: 7px; box-shadow: inset 1px 0 #fff; letter-spacing: -0.5px; }
.zbtn i { width: 1px; height: 18px; background: #999; }
.zcell { margin-left: 4px; border: 1px solid #a0a0a0; border-color: #a0a0a0 #fff #fff #a0a0a0; display: flex; align-items: center; }
.z1 { width: 34px; padding-left: 6px; } .z2 { width: 104px; margin-left: 2px; padding: 0 2px 2px 1px; } .z3 { width: 30px; margin-left: 2px; padding-left: 7px; }
.track { height: 2px; flex: 1; background: #888; }
.t-left { flex: none; width: 9px; }
.knob { width: 13px; height: 30px; flex: none; background: #efefef; border: 1px solid #777; border-color: #fff #777 #777 #fff; border-right-width: 2px; }

.taskbar { height: 60px; flex: none; display: flex; align-items: center; border-top: 1px solid #e6cfc9; background: linear-gradient(90deg, #f4e4d1 0, #f8e7d8 180px, #eddcc9 275px, #f0d6dc 340px, #f3d4dc 470px, #eed9ce 530px, #efdacf 650px, #e6d4d4 710px, #f0dadd 760px, #f1dbdc 900px, #ecd4db 980px, #eedace 1130px, #eedacf 1220px, #f0d8df 1320px, #f6e5d5 1420px, #f7e7d9 1920px); }
.weather { display: flex; gap: 9px; width: 475px; padding: 0 0 2px 28px; align-items: center; line-height: 20px; letter-spacing: -0.6px; }
.dim { color: #625d58; letter-spacing: -0.2px; }
.start { margin-bottom: 1px; }
.search { width: 274px; height: 39px; margin: 0 0 1px 18px; border-radius: 20px; background: #fbf5f3; border: 1px solid #e0cecb; border-bottom-color: #bfaead; display: flex; align-items: center; padding-left: 12px; gap: 12px; font-size: 16px; color: #5c5a5a; }
.search span { margin-top: 1px; }
.apps { display: flex; margin-left: 2px; }
.app { width: 55px; height: 48px; display: flex; align-items: center; justify-content: center; position: relative; margin-bottom: 1px; }
.run svg[width="38"] { margin: -7px 0 0 6px; }
.run::after, .active::after { content: ""; position: absolute; left: 23px; bottom: 0; width: 8px; height: 4px; border-radius: 2px; background: #8b7a7c; }
.active { width: 48px; margin-left: 4px; background: #fbf3ec; border: 1px solid #eee0d8; border-radius: 5px; }
.active::after { width: 20px; left: 13px; background: #0078d7; }
.tile { font: bold 13px "Open Sans", sans-serif; fill: #fff; }
.tray { display: flex; align-items: center; margin-left: auto; padding-right: 22px; font-size: 14.5px; line-height: 20px; letter-spacing: -0.3px; }
.sync { margin-left: 11px; }
.lang { width: 32px; margin-left: 17px; text-align: center; }
.net { margin-left: 21px; } .vol { margin-left: 9px; } .bat { margin-left: 10px; }
.clock { width: 78px; margin-left: 13px; text-align: right; }
.date { letter-spacing: -0.15px; }
.badge { width: 25px; height: 20px; margin-left: 13px; border-radius: 10px; background: #0078d7; color: #fff; text-align: center; font-size: 12px; }
```
